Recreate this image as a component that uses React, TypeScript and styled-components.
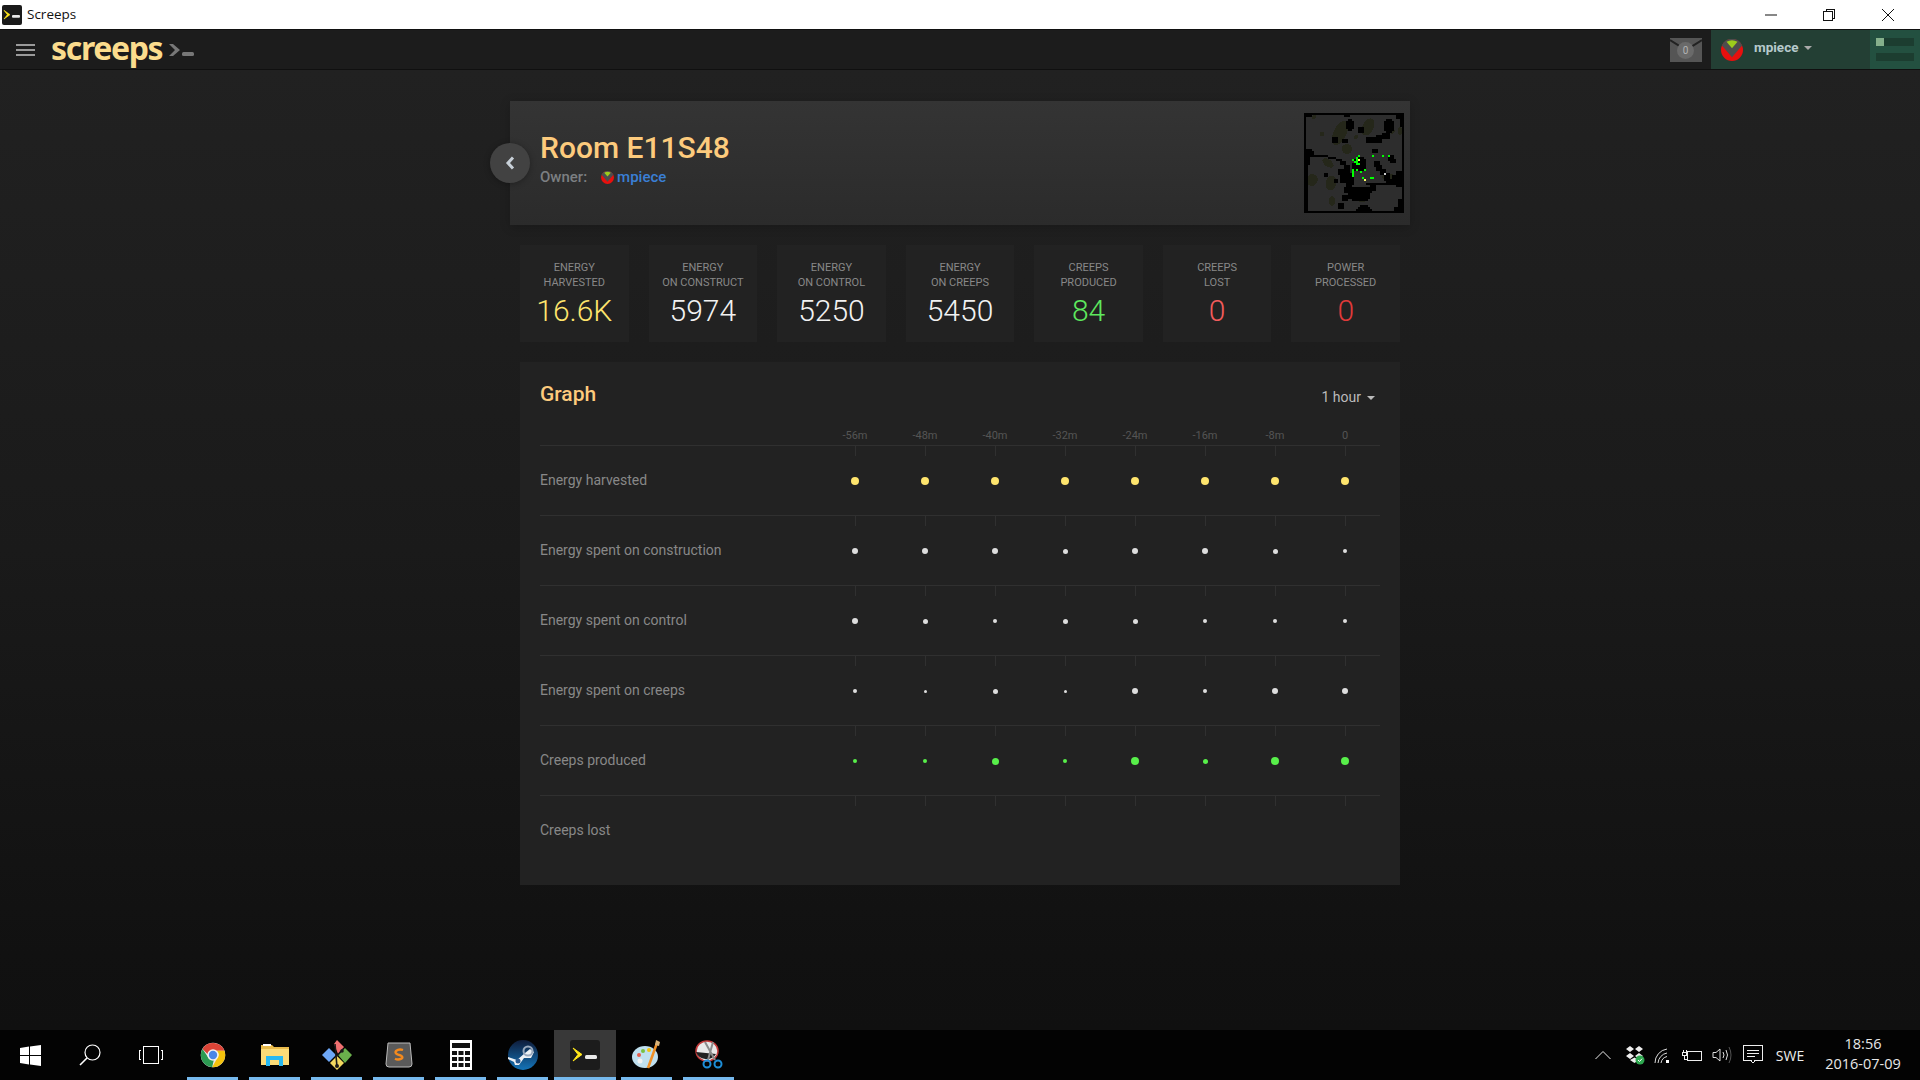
import React from "react";
import styled, { createGlobalStyle } from "styled-components";

const Global = createGlobalStyle`
  html, body { margin: 0; padding: 0; height: 100%; overflow: hidden; background: #111; }
  #root { height: 100%; }
  * { box-sizing: border-box; }
`;

const Page = styled.div`
  width: 1920px; height: 1080px; display: flex; flex-direction: column;
  font-family: Roboto, "Liberation Sans", sans-serif;
`;
const TitleBar = styled.div`
  height: 29px; background: #fff; display: flex; align-items: center; flex: none; padding-left: 2px;
  font-family: "Open Sans", "Liberation Sans", sans-serif; font-size: 13.5px; color: #111;
`;
const TitleText = styled.span` margin-left: 5px; margin-top: -2px; `;
const WinControls = styled.div` margin-left: auto; display: flex; padding-right: 3px; `;
const WinButton = styled.div`
  width: 58.5px; height: 29px; display: flex; align-items: center; justify-content: center;
`;
const Header = styled.header`
  height: 41px; flex: none; display: flex; align-items: stretch; background: #1c1c1c;
  border-top: 1px solid #111; border-bottom: 1px solid #101010;
`;
const Burger = styled.div`
  margin-left: 16px; width: 19px; display: flex; flex-direction: column; justify-content: center; gap: 3px;
  span { display: block; height: 2px; background: #9a9a9a; }
`;
const Logo = styled.div`
  margin-left: 16px; display: flex; align-items: center; gap: 7px;
`;
const LogoText = styled.span`
  font-family: "Noto Sans", sans-serif; font-weight: 700; font-size: 32px; line-height: 32px;
  letter-spacing: -1.35px; color: #fbdc8d; margin-top: -3px;
`;
const HeaderRight = styled.div` margin-left: auto; display: flex; align-items: stretch; `;
const Mail = styled.div`
  position: relative; width: 32px; height: 24px; margin: 8px 9px 0 0; background: #555;
`;
const MailCount = styled.span`
  position: absolute; left: 7px; top: 4px; width: 17px; height: 17px; border-radius: 50%; background: #6a6a6a;
  color: #b4b4b4; font-size: 10px; line-height: 17px; text-align: center;
`;
const UserBox = styled.div`
  width: 159px; background: #233f34; display: flex; align-items: center; padding-left: 10px; gap: 11px;
`;
const UserName = styled.span`
  font-size: 13.5px; font-weight: 700; color: #b6c9cb; margin-top: -6px;
`;
const Caret = styled.span<{ $c: string }>`
  display: inline-block; width: 0; height: 0; margin-left: 6px; vertical-align: middle;
  border-left: 4px solid transparent; border-right: 4px solid transparent; border-top: 4px solid ${p => p.$c};
`;
const Cpu = styled.div`
  width: 50px; background: #235040; padding: 8px 6px; display: flex; flex-direction: column; gap: 7px;
`;
const Meter = styled.div<{ $fill: number }>`
  height: 8px; background: #1c3d30;
  &::before { content: ""; display: block; height: 100%; width: ${p => p.$fill}px; background: #85b08c; }
`;

const Main = styled.main`
  flex: 1; min-height: 0; display: flex; flex-direction: column; align-items: center; padding-top: 31px;
  background: linear-gradient(180deg, #212121 0%, #1a1a1a 50%, #111 92%, #101010 100%);
`;
const Column = styled.div` width: 900px; display: flex; flex-direction: column; `;
const Hero = styled.section`
  position: relative; height: 124px; padding: 12px 6px 0 30px; display: flex; justify-content: space-between;
  background: linear-gradient(180deg, #343434 0%, #2b2b2b 100%);
  box-shadow: 0 2px 10px rgba(0,0,0,.2);
`;
const BackButton = styled.div`
  position: absolute; left: -20px; top: 42px; width: 40px; height: 40px; border-radius: 50%;
  background: #424242; display: flex; align-items: center; justify-content: center;
  box-shadow: 0 1px 6px rgba(0,0,0,.3);
`;
const HeroText = styled.div` padding-top: 17px; `;
const RoomTitle = styled.h1`
  margin: 0; font-size: 30px; line-height: 36px; font-weight: 500; color: #fdcb7d;
`;
const Owner = styled.div`
  display: flex; align-items: center; font-size: 15px; line-height: 20px; font-weight: 500; color: #7c7f82; margin-top: 1px;
`;
const OwnerName = styled.span` color: #3a7fd5; margin-left: 3px; `;
const OwnerIcon = styled.span` margin-left: 14px; display: flex; `;
const MiniMap = styled.svg` width: 100px; height: 100px; display: block; `;

const Stats = styled.div`
  margin: 20px 10px 0; display: grid; grid-template-columns: repeat(7, 1fr); gap: 20px;
`;
const StatCard = styled.div`
  height: 97px; background: #222; text-align: center; padding-top: 15px;
`;
const StatLabel = styled.div`
  font-size: 11px; line-height: 15px; color: #888; text-transform: uppercase;
`;
const StatValue = styled.div<{ $c: string }>`
  font-size: 30px; line-height: 36px; font-weight: 300; color: ${p => p.$c}; margin-top: 3px;
`;
const GraphPanel = styled.section`
  margin: 20px 10px 0; height: 523px; background: #222; padding: 20px 20px 0;
`;
const GraphHead = styled.div`
  height: 36px; display: flex; justify-content: space-between; align-items: flex-start; padding-right: 5px;
`;
const GraphTitle = styled.h2`
  margin: 0; font-size: 21px; line-height: 24px; font-weight: 500; color: #fdcb7d;
`;
const Range = styled.div`
  font-size: 14px; line-height: 16px; color: #bbb; margin-top: 7px;
`;
const Axis = styled.div`
  height: 27px; display: grid; grid-template-columns: 280px repeat(8, 70px); align-items: end; padding-bottom: 2px;
`;
const AxisLabel = styled.span`
  font-size: 11px; line-height: 14px; color: #555; text-align: center;
`;
const Row = styled.div`
  height: 70px; display: grid; grid-template-columns: 280px repeat(8, 70px); align-items: center;
  border-top: 1px solid #303030;
`;
const RowLabel = styled.span`
  font-size: 14px; color: #888; margin-top: -2px;
`;
const Cell = styled.div`
  position: relative; height: 69px; display: flex; align-items: center; justify-content: center; padding-top: 1px;
  &::before { content: ""; position: absolute; left: 35px; top: 0; width: 1px; height: 10px; background: #303030; }
`;
const Dot = styled.span<{ $s: number; $c: string }>`
  width: ${p => p.$s}px; height: ${p => p.$s}px; border-radius: 50%; background: ${p => p.$c};
`;

const Taskbar = styled.footer`
  height: 50px; flex: none; background: #030303; display: flex; align-items: stretch; color: #eee;
  font-family: "Open Sans", "Liberation Sans", sans-serif;
`;
const SysIcon = styled.div<{ $w: number }>`
  width: ${p => p.$w}px; display: flex; align-items: center; justify-content: center;
`;
const AppSlot = styled.div<{ $on?: boolean }>`
  position: relative; width: 62px; display: flex; align-items: center; justify-content: center;
  background: ${p => (p.$on ? "#383838" : "transparent")};
  &::after { content: ""; position: absolute; bottom: 0; left: ${p => (p.$on ? 0 : 5)}px; right: ${p => (p.$on ? 0 : 6)}px; height: 3px; background: #76b9ed; }
`;
const Tray = styled.div` margin-left: auto; display: flex; align-items: center; `;
const TrayIcon = styled.div<{ $w: number }>`
  width: ${p => p.$w}px; display: flex; justify-content: center;
`;
const Lang = styled.span` font-size: 14px; width: 44px; text-align: center; `;
const Clock = styled.div`
  width: 96px; text-align: center; font-size: 14.5px; line-height: 20px; margin-left: 12px; color: #e8e8e8;
  padding-right: 18px; white-space: nowrap; margin-top: -2px;
`;

const Avatar = ({ s }: { s: number }) => (
  <svg width={s} height={s} viewBox="0 0 24 24">
    <circle cx="12" cy="12" r="12" fill="#e8100e" />
    <path d="M1 7 A12 12 0 0 1 23 7 L12 20 Z" fill="#4d4d4d" />
    <path d="M6 3 A12 12 0 0 1 18 3 L12 10 Z" fill="#9ccc1c" />
  </svg>
);

const TermIcon = ({ s, bg }: { s: number; bg: string }) => (
  <svg width={s} height={s} viewBox="0 0 30 30">
    <rect width="30" height="30" rx="3" fill={bg} />
    <path d="M3 8 L12 14.5 L3 21 L8 14.5 Z" fill="#ffe61a" stroke="#ffe61a" strokeWidth="1" />
    <rect x="15" y="15" width="12" height="4" rx="1.5" fill="#e8e8e8" />
  </svg>
);

const Chrome = () => (
  <svg width="28" height="28" viewBox="0 0 32 32">
    <circle cx="16" cy="16" r="14" fill="#e8e8e8" />
    <path d="M4 9 A14 14 0 0 1 29 11 L16 11 A5.5 5.5 0 0 0 10 15 Z" fill="#db4437" />
    <path d="M29 11 A14 14 0 0 1 15 30 L21 19 A5.5 5.5 0 0 0 20 11 Z" fill="#f4c20d" />
    <path d="M15 30 A14 14 0 0 1 4 9 L10 18 A6 6 0 0 0 17 21.5 Z" fill="#2c9a52" />
    <circle cx="16" cy="16" r="6.5" fill="#f1f1f1" />
    <circle cx="16" cy="16" r="4.8" fill="#4a86e8" />
  </svg>
);
const Folder = () => (
  <svg width="28" height="24" viewBox="0 0 28 24">
    <path d="M0 2 H11 L13 4 H28 V22 H0 Z" fill="#e9bb4c" />
    <rect x="2" y="1" width="8" height="2" fill="#fff" />
    <rect y="6" width="28" height="16" fill="#fbdc78" />
    <path d="M5 23 V13 H22 V23 H18 V17 H9 V23 Z" fill="#27b9f2" />
  </svg>
);
const GitApp = () => (
  <svg width="32" height="32" viewBox="0 0 32 32">
    <path d="M16 1 L23 8 L17 15 L13 5 Z" fill="#f07070" />
    <path d="M24 9 L31 16 L24 24 L17 16 Z" fill="#6ab04c" />
    <path d="M16 17 L23 24 L16 31 L9 24 Z" fill="#f2d860" />
    <path d="M8 9 L15 16 L8 23 L1 16 Z" fill="#6ea8f7" />
    <path d="M14 5 L16 28 M22 10 L16 17" stroke="#1a1a1a" strokeWidth="1.6" fill="none" />
    <circle cx="16" cy="27" r="2" fill="#1a1a1a" />
    <circle cx="21" cy="12" r="1.8" fill="#1a1a1a" />
  </svg>
);
const Sublime = () => (
  <svg width="28" height="26" viewBox="0 0 28 26">
    <path d="M3 1 H25 L27 22 Q27 25 24 25 H4 Q1 25 1 22 Z" fill="#5a5a5a" stroke="#bbb" strokeWidth="1" />
    <path d="M18 8 Q14 6.5 11 9 Q9.5 11 12.5 12.3 L16 13.7 Q18.5 15 16.5 16.7 Q13 18.3 10 16.8" fill="none" stroke="#f48a1d" strokeWidth="2.4" />
  </svg>
);
const Calc = () => (
  <svg width="22" height="30" viewBox="0 0 22 30">
    <rect width="22" height="30" fill="#fff" />
    <rect x="2" y="3" width="18" height="5" fill="#111" />
    {[11, 17, 23].map(y => [2, 8.5, 15].map(x => <rect key={`${x}-${y}`} x={x} y={y} width="5" height="4" fill="#111" />))}
  </svg>
);
const Steam = () => (
  <svg width="30" height="30" viewBox="0 0 30 30">
    <defs>
      <linearGradient id="stm" x1="0" y1="0" x2="0" y2="1">
        <stop offset="0" stopColor="#0f1c3a" /><stop offset="1" stopColor="#1474b8" />
      </linearGradient>
    </defs>
    <circle cx="15" cy="15" r="15" fill="url(#stm)" />
    <path d="M0 17 L9 20 L17 13 L22 9 L26 12 L23 18 L16 18 L11 25 L7 25 L6 22 L0 19 Z" fill="#eef2f6" />
    <circle cx="20" cy="11" r="4.5" fill="none" stroke="#9aa9bd" strokeWidth="2" />
    <circle cx="10" cy="21" r="2.5" fill="#2a5a90" />
  </svg>
);
const Palette = () => (
  <svg width="30" height="30" viewBox="0 0 30 30">
    <ellipse cx="13" cy="17" rx="13" ry="11" fill="#bfe0ef" />
    <circle cx="7" cy="15" r="2" fill="#e85c4a" /><circle cx="11" cy="11" r="2" fill="#7ac143" />
    <circle cx="17" cy="10" r="2" fill="#f4c20d" /><circle cx="8" cy="21" r="2.5" fill="#f3f3f3" />
    <path d="M25 3 L16 28" stroke="#ef8f26" strokeWidth="2.5" />
    <path d="M23 5 L24 0 L28 2 L27 6 Z" fill="#d8b37a" />
  </svg>
);
const Snip = () => (
  <svg width="30" height="30" viewBox="0 0 30 30">
    <ellipse cx="13" cy="11" rx="11" ry="10" fill="#e9e9e9" stroke="#c33b3b" strokeWidth="1.5" />
    <path d="M2 12 A11 10 0 0 0 22 14 Z" fill="#222" />
    <path d="M11 2 L21 20 M19 2 L14 20" stroke="#8b8b8b" strokeWidth="2" />
    <circle cx="13" cy="24" r="3.5" fill="none" stroke="#1d8ed8" strokeWidth="2" />
    <circle cx="24" cy="24" r="3.5" fill="none" stroke="#1d8ed8" strokeWidth="2" />
  </svg>
);

const WALLS: number[][] = [
  [0,0,50,1],[0,49,50,1],[0,0,1,50],[49,0,1,50],[1,1,3,1],[46,1,3,2],[20,1,3,1],[48,3,1,4],
  [14,12,3,3],[27,7,3,3],[21,4,4,4],[22,3,2,6],[40,4,5,5],[41,3,3,7],[31,12,8,3],[36,11,7,2],[39,10,4,1],
  [19,13,3,2],[34,18,3,2],[42,21,3,3],[43,23,3,2],
  [0,21,12,1],[1,18,3,3],[3,19,2,2],[12,22,4,1],[16,23,3,1],[18,24,3,2],[20,26,3,3],
  [1,22,2,4],[1,26,1,12],[1,38,1,11],
  [25,23,6,5],[26,22,4,7],[24,25,2,4],
  [35,24,3,3],[36,26,3,3],[38,28,3,3],[40,30,3,4],[41,33,3,2],[44,31,5,4],[46,29,3,4],
  [31,35,18,1],[46,36,3,1],
  [17,28,6,3],[18,31,5,4],[21,34,3,3],[23,30,2,6],
  [20,37,14,3],[22,40,11,3],[24,43,8,1],[19,41,3,3],[33,36,3,3],
  [28,46,4,3],[27,47,6,2],[26,48,8,1],[17,45,3,3],[47,43,2,5],[45,47,4,2],
  [15,33,2,2],[10,30,2,2],
];
const SWAMPS: number[][] = [
  [18,10,3.2,6.5,25],[32,7,2.8,4.5,25],[21.5,18,2.6,2.6,0],[12,25,3.2,1.8,35],[4,33.5,2.8,3,30],[13.5,35,2.6,3.8,15],
  [14,44,1.5,2.6,0],[29,43,2.6,1.6,0],[42.5,32,3.5,1.6,0],[5,2,1,1,0],[9,10.5,1.2,1.2,0],[26,12,1,1,0],[44,9,1.4,1.4,0],[48,9,1,2,0],
];
const GREENS: number[][] = [
  [27,21,1,1],[26,22,1,4],[24,23,1,1],[25,24,2,1],[27,25,1,1],[34,21,1,1],[39,21,1,1],[42,21,1,1],
  [24,28,1,4],[26,28,1,1],[28,29,1,1],[30,28,1,1],[29,32,1,1],[33,32,2,1],
];
const RoomMap = () => (
  <MiniMap viewBox="0 0 50 50" shapeRendering="crispEdges">
    <rect width="50" height="50" fill="#2d2d2d" />
    {SWAMPS.map(([x, y, rx, ry, a], i) => (
      <ellipse key={i} cx={x} cy={y} rx={rx} ry={ry} fill="#25271a" transform={`rotate(${a} ${x} ${y})`} />
    ))}
    {WALLS.map(([x, y, w, h], i) => <rect key={i} x={x} y={y} width={w} height={h} fill="#000" />)}
    {GREENS.map(([x, y, w, h], i) => <rect key={i} x={x} y={y} width={w} height={h} fill="#00ff00" />)}
    <rect x="27" y="23" width="1" height="1" fill="#ffff66" />
    <rect x="30" y="33" width="1" height="1" fill="#ffff66" />
    <rect x="40" y="30" width="1" height="1" fill="#cccccc" />
  </MiniMap>
);

const YEL = "#ffe56d", WHI = "#dedede", GRN = "#58f04a";
const STATS = [
  ["Energy", "Harvested", "16.6K", YEL],
  ["Energy", "on construct", "5974", "#f2f2f2"],
  ["Energy", "on control", "5250", "#f2f2f2"],
  ["Energy", "on creeps", "5450", "#f2f2f2"],
  ["Creeps", "produced", "84", "#5ee85e"],
  ["Creeps", "lost", "0", "#f25c5c"],
  ["Power", "processed", "0", "#e03a3a"],
];
const AXIS = ["-56m", "-48m", "-40m", "-32m", "-24m", "-16m", "-8m", "0"];
const ROWS: { label: string; c: string; d: number[] }[] = [
  { label: "Energy harvested", c: YEL, d: [8, 8, 8, 8, 8, 8, 8, 8] },
  { label: "Energy spent on construction", c: WHI, d: [6, 6, 6, 5, 6, 6, 5, 4] },
  { label: "Energy spent on control", c: WHI, d: [6, 5, 4, 5, 5, 4, 4, 4] },
  { label: "Energy spent on creeps", c: WHI, d: [4, 3, 5, 3, 6, 4, 6, 6] },
  { label: "Creeps produced", c: GRN, d: [4, 4, 7, 4, 8, 5, 8, 8] },
  { label: "Creeps lost", c: GRN, d: [0, 0, 0, 0, 0, 0, 0, 0] },
];

export default function App() {
  return (
    <Page>
      <Global />
      <TitleBar>
        <TermIcon s={20} bg="#1a1a1a" />
        <TitleText>Screeps</TitleText>
        <WinControls>
          <WinButton><svg width="12" height="2"><rect width="12" height="1" y="0.5" fill="#111" /></svg></WinButton>
          <WinButton>
            <svg width="12" height="12" viewBox="0 0 12 12" fill="none" stroke="#111" shapeRendering="crispEdges">
              <rect x="0.5" y="2.5" width="9" height="9" /><path d="M3 2.5 V0.5 H11.5 V9 H9.5" />
            </svg>
          </WinButton>
          <WinButton>
            <svg width="12" height="12" viewBox="0 0 12 12" stroke="#111"><path d="M0 0 L12 12 M12 0 L0 12" /></svg>
          </WinButton>
        </WinControls>
      </TitleBar>

      <Header>
        <Burger><span /><span /><span /></Burger>
        <Logo>
          <LogoText>screeps</LogoText>
          <svg width="26" height="12" viewBox="0 0 26 12">
            <path d="M0 0 H4 L11 6 L4 12 H0 L6 6 Z" fill="#777" />
            <rect x="13" y="8" width="12" height="4" rx="1.5" fill="#777" />
          </svg>
        </Logo>
        <HeaderRight>
          <Mail>
            <svg width="32" height="24" viewBox="0 0 32 24"><path d="M0 2 L16 12 L32 2" fill="none" stroke="#222" strokeWidth="2" /></svg>
            <MailCount>0</MailCount>
          </Mail>
          <UserBox>
            <Avatar s={22} />
            <UserName>mpiece<Caret $c="#aaa" /></UserName>
          </UserBox>
          <Cpu><Meter $fill={8} /><Meter $fill={0} /></Cpu>
        </HeaderRight>
      </Header>

      <Main>
        <Column>
          <Hero>
            <BackButton>
              <svg width="14" height="16" viewBox="0 0 14 16"><path d="M10 2.5 L5 8 L10 13.5" fill="none" stroke="#c8d0d8" strokeWidth="3" /></svg>
            </BackButton>
            <HeroText>
              <RoomTitle>Room E11S48</RoomTitle>
              <Owner>Owner:<OwnerIcon><Avatar s={13} /></OwnerIcon><OwnerName>mpiece</OwnerName></Owner>
            </HeroText>
            <RoomMap />
          </Hero>
          <Stats>
            {STATS.map(([a, b, v, c]) => (
              <StatCard key={a + b}>
                <StatLabel>{a}<br />{b}</StatLabel>
                <StatValue $c={c}>{v}</StatValue>
              </StatCard>
            ))}
          </Stats>
          <GraphPanel>
            <GraphHead>
              <GraphTitle>Graph</GraphTitle>
              <Range>1 hour<Caret $c="#bbb" /></Range>
            </GraphHead>
            <Axis>
              <span />
              {AXIS.map(a => <AxisLabel key={a}>{a}</AxisLabel>)}
            </Axis>
            {ROWS.map(r => (
              <Row key={r.label}>
                <RowLabel>{r.label}</RowLabel>
                {r.d.map((s, i) => <Cell key={i}>{s > 0 && <Dot $s={s} $c={r.c} />}</Cell>)}
              </Row>
            ))}
          </GraphPanel>
        </Column>
      </Main>

      <Taskbar>
        <SysIcon $w={60}>
          <svg width="21" height="21" viewBox="0 0 21 21" fill="#fff">
            <path d="M0 3 L9 1.6 V10 H0 Z M10 1.4 L21 0 V10 H10 Z M0 11 H9 V19.4 L0 18 Z M10 11 H21 V21 L10 19.6 Z" />
          </svg>
        </SysIcon>
        <SysIcon $w={60}>
          <svg width="22" height="22" viewBox="0 0 22 22" fill="none" stroke="#fff" strokeWidth="1.2">
            <circle cx="13.5" cy="8.5" r="7.5" /><path d="M8 14 L1 21" strokeWidth="1.6" />
          </svg>
        </SysIcon>
        <SysIcon $w={62}>
          <svg width="24" height="18" viewBox="0 0 24 18" fill="none" stroke="#fff" shapeRendering="crispEdges">
            <rect x="4.5" y="0.5" width="15" height="17" /><path d="M2 4.5 H0.5 V13.5 H2 M22 4.5 H23.5 V13.5 H22" />
          </svg>
        </SysIcon>
        <AppSlot><Chrome /></AppSlot>
        <AppSlot><Folder /></AppSlot>
        <AppSlot><GitApp /></AppSlot>
        <AppSlot><Sublime /></AppSlot>
        <AppSlot><Calc /></AppSlot>
        <AppSlot><Steam /></AppSlot>
        <AppSlot $on><TermIcon s={30} bg="#1c1c1c" /></AppSlot>
        <AppSlot><Palette /></AppSlot>
        <AppSlot><Snip /></AppSlot>
        <Tray>
          <TrayIcon $w={42}>
            <svg width="16" height="10" viewBox="0 0 16 10" fill="none" stroke="#eee"><path d="M0.5 9 L8 1.5 L15.5 9" /></svg>
          </TrayIcon>
          <TrayIcon $w={22}>
            <svg width="20" height="20" viewBox="0 0 20 20">
              <path d="M5 1 L9 4 L5 7 L1 4 Z M14 1 L18 4 L14 7 L10 4 Z M5 8 L9 11 L5 14 L1 11 Z M14 8 L18 11 L14 14 L10 11 Z M5 15 L9.5 12.5 L14 15 L9.5 18 Z" fill="#eee" />
              <circle cx="15" cy="15" r="4.5" fill="#2ea84f" />
              <path d="M13 15 L14.5 16.5 L17 13.7" stroke="#fff" fill="none" />
            </svg>
          </TrayIcon>
          <TrayIcon $w={32}>
            <svg width="17" height="17" viewBox="0 0 17 17" fill="none" stroke="#ddd">
              <path d="M1 16 A14 14 0 0 1 13 2 M4 16 A11 11 0 0 1 13 6 M7 16 A8 8 0 0 1 13 9.5" />
              <rect x="12" y="13" width="3" height="3" fill="#fff" stroke="none" />
            </svg>
          </TrayIcon>
          <TrayIcon $w={28}>
            <svg width="20" height="13" viewBox="0 0 20 13" fill="none" stroke="#eee" shapeRendering="crispEdges">
              <rect x="5.5" y="2.5" width="14" height="9" /><path d="M1 1 V3 M4 1 V3 M0.5 3.5 H4.5 V6 H0.5 Z M2.5 6 V10 H5" />
            </svg>
          </TrayIcon>
          <TrayIcon $w={32}>
            <svg width="20" height="16" viewBox="0 0 20 16" fill="none" stroke="#ddd">
              <path d="M1 5.5 H4 L8 2 V14 L4 10.5 H1 Z M11 5 Q13 8 11 11 M14 3 Q17 8 14 13" /><path d="M17 0 Q21 8 17 16" stroke="#555" />
            </svg>
          </TrayIcon>
          <TrayIcon $w={30}>
            <svg width="20" height="20" viewBox="0 0 20 20" fill="none" stroke="#eee" shapeRendering="crispEdges">
              <path d="M0.5 0.5 H19.5 V15.5 H12 L10 18 L8 15.5 H0.5 Z M4 5.5 H16 M4 8.5 H16 M4 11.5 H12" />
            </svg>
          </TrayIcon>
          <Lang>SWE</Lang>
          <Clock>18:56<br />2016-07-09</Clock>
        </Tray>
      </Taskbar>
    </Page>
  );
}
